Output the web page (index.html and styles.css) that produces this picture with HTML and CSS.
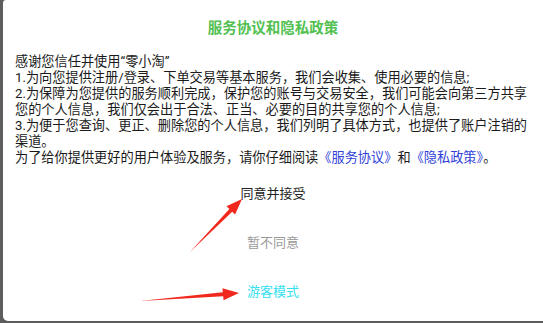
FILE: index.html
```html
<!DOCTYPE html>
<html lang="zh">
<head>
<meta charset="utf-8">
<link rel="stylesheet" href="styles.css">
</head>
<body>
<div class="dialog">
  <h1 class="title">服务协议和隐私政策</h1>
  <div class="content">
    <p>感谢您信任并使用“零小淘”</p>
    <p>1.为向您提供注册/登录、下单交易等基本服务，我们会收集、使用必要的信息;</p>
    <p>2.为保障为您提供的服务顺利完成，保护您的账号与交易安全，我们可能会向第三方共享您的个人信息，我们仅会出于合法、正当、必要的目的共享您的个人信息;</p>
    <p>3.为便于您查询、更正、删除您的个人信息，我们列明了具体方式，也提供了账户注销的渠道。</p>
    <p>为了给你提供更好的用户体验及服务，请你仔细阅读<span class="link">《服务协议》</span>和<span class="link">《隐私政策》</span>。</p>
  </div>
  <div class="actions">
    <div class="btn btn-accept">同意并接受</div>
    <div class="btn btn-reject">暂不同意</div>
    <div class="btn btn-guest">游客模式</div>
  </div>
  <svg class="arrows" width="543" height="321" viewBox="0 0 543 321">
    <polygon points="190,252 229.4,209 226.5,206.2 242,199 235.1,214.6 232.2,211.8" fill="#f0281e"/>
    <polygon points="140,301 222.8,292.3 222.5,288.3 239,293 223.5,300.3 223.2,296.3" fill="#f0281e"/>
  </svg>
</div>
</body>
</html>
```
FILE: styles.css
```css
html, body {
  margin: 0;
  padding: 0;
}
body {
  width: 543px;
  height: 323px;
  background: #5d5d5d;
  overflow: hidden;
  font-family: "Roboto", "Noto Sans CJK SC", sans-serif;
}
.dialog {
  position: relative;
  margin-left: 3px;
  width: 540px;
  height: 321px;
  background: #fff;
  border-radius: 3px 0 0 5px;
  box-sizing: border-box;
}
.title {
  margin: 0;
  padding-top: 19px;
  height: 35px;
  box-sizing: border-box;
  text-align: center;
  font-size: 14.5px;
  line-height: 20px;
  font-weight: bold;
  color: #52c152;
}
.content {
  padding: 19px 10px 0 12px;
  font-size: 13.2px;
  line-height: 16px;
  color: #1a1a1a;
}
.content p {
  margin: 0;
}
.link {
  color: #2f3fd8;
}
.actions {
  display: flex;
  flex-direction: column;
  align-items: center;
  margin-top: 18px;
  gap: 29px;
}
.btn {
  font-size: 13px;
  line-height: 20px;
}
.btn-accept {
  color: #222;
}
.btn-reject {
  color: #9a9a9a;
}
.btn-guest {
  color: #35dff0;
}
.arrows {
  position: absolute;
  left: -3px;
  top: 0;
}
```
